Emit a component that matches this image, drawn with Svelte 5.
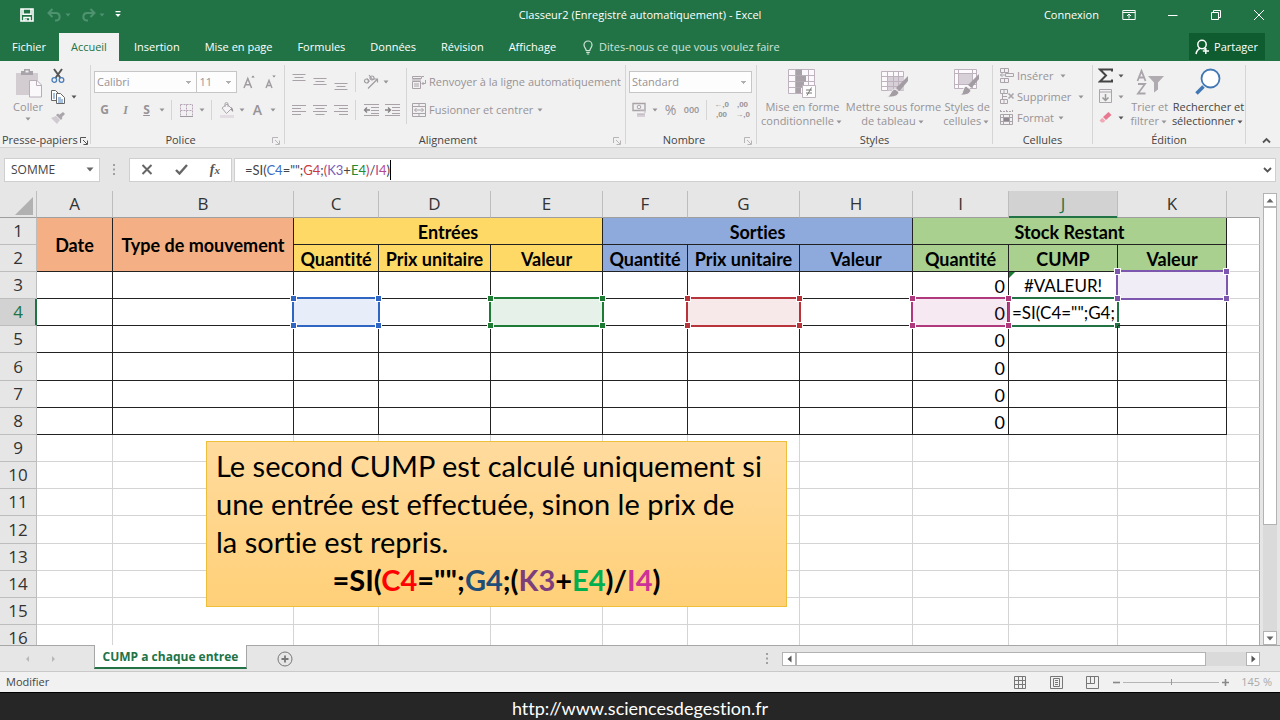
<script lang="ts">
  type Cell = {
    text?: string;
    span?: number;
    rows?: number;
    kind?: string;
    range?: string;
    error?: boolean;
  };

  const tabs = ["Fichier", "Accueil", "Insertion", "Mise en page", "Formules", "Données", "Révision", "Affichage"];
  let activeTab = $state("Accueil");

  const columns = [
    { name: "A", width: 76 },
    { name: "B", width: 181 },
    { name: "C", width: 85 },
    { name: "D", width: 112 },
    { name: "E", width: 112 },
    { name: "F", width: 85 },
    { name: "G", width: 112 },
    { name: "H", width: 113 },
    { name: "I", width: 96 },
    { name: "J", width: 109 },
    { name: "K", width: 109 },
  ];

  const blank = (n: number): Cell[] => Array.from({ length: n }, () => ({}));
  const line = (): Cell[] => [...blank(8), { text: "0", kind: "num" }, ...blank(2)];

  const rows: Cell[][] = [
    [
      { text: "Date", rows: 2, kind: "orange" },
      { text: "Type de mouvement", rows: 2, kind: "orange" },
      { text: "Entrées", span: 3, kind: "yellow" },
      { text: "Sorties", span: 3, kind: "blue" },
      { text: "Stock Restant", span: 3, kind: "green" },
    ],
    [
      { text: "Quantité", kind: "yellow" },
      { text: "Prix unitaire", kind: "yellow" },
      { text: "Valeur", kind: "yellow" },
      { text: "Quantité", kind: "blue" },
      { text: "Prix unitaire", kind: "blue" },
      { text: "Valeur", kind: "blue" },
      { text: "Quantité", kind: "green" },
      { text: "CUMP", kind: "green" },
      { text: "Valeur", kind: "green" },
    ],
    [...blank(8), { text: "0", kind: "num" }, { text: "#VALEUR!", kind: "center", error: true }, { range: "r-violet" }],
    [
      ...blank(2),
      { range: "r-blue" },
      {},
      { range: "r-green" },
      {},
      { range: "r-red" },
      {},
      { text: "0", kind: "num", range: "r-pink" },
      { text: '=SI(C4="";G4;', kind: "edit", range: "r-edit" },
      {},
    ],
    line(),
    line(),
    line(),
    line(),
    ...Array.from({ length: 8 }, () => blank(11)),
  ];

  const formula = [
    ["=SI(", ""],
    ["C4", "blue"],
    ['="";', ""],
    ["G4", "red"],
    [";", ""],
    ["(", "red"],
    ["K3", "violet"],
    ["+", ""],
    ["E4", "green"],
    [")", "red"],
    ["/", ""],
    ["I4", "pink"],
    [")", ""],
  ];

  const note = [
    ["=SI(", "#000"],
    ["C4", "#f00"],
    ['="";', "#000"],
    ["G4", "#1f4e79"],
    [";(", "#000"],
    ["K3", "#7c3f7c"],
    ["+", "#000"],
    ["E4", "#00b050"],
    [")/", "#000"],
    ["I4", "#cc3399"],
    [")", "#000"],
  ];
</script>

{#snippet caret(dark = false)}
  <svg class="caret" class:dark width="10" height="6" viewBox="0 0 10 6"><path d="M2.500 1.500h5L5 4.500z" fill="currentColor" /></svg>
{/snippet}

{#snippet launcher(dark = false)}
  <button class="launcher" class:dark aria-label="Options">
    <svg width="8" height="8" viewBox="0 0 8 8" fill="none" stroke="currentColor"><path d="M.5 6V.5H6M3 3l4 4M7.500 3.500v4h-4" /></svg>
  </button>
{/snippet}

{#snippet lines(widths: number[], top: number, side: string)}
  <svg width="16" height="20" viewBox="0 0 16 20" stroke="#a9a3a9" stroke-width="1">
    {#each widths as w, i}
      {@const x = side === "right" ? 15 - w : side === "center" ? (16 - w) / 2 : 1}
      <path d="M{x} {top + i * 3 + 0.5}h{w}" />
    {/each}
  </svg>
{/snippet}

<div class="app">
  <header>
    <div class="titlebar">
      <div class="quick">
        <button aria-label="Enregistrer">
          <svg width="14" height="14" viewBox="0 0 14 14" fill="none" stroke="#fff" stroke-width="1.600"><path d="M1 1h12v12H1zM3 1v5.200h8V1" /><path d="M4 13V9.500h6V13" /><path d="M6 10.500v2" /></svg>
        </button>
        <button class="dim" aria-label="Annuler">
          <svg width="15" height="14" viewBox="0 0 15 14" fill="none" stroke="currentColor" stroke-width="2"><path d="M5.500 1L1.500 5l4 4M2 5h7.500a3.800 3.800 0 0 1 0 7.500H8" /></svg>
          {@render caret()}
        </button>
        <button class="dim" aria-label="Rétablir">
          <svg width="15" height="14" viewBox="0 0 15 14" fill="none" stroke="currentColor" stroke-width="2"><path d="M9.500 1l4 4-4 4M13 5H5.500a3.800 3.800 0 0 0 0 7.500H7" /></svg>
          {@render caret()}
        </button>
        <button aria-label="Personnaliser">
          <svg width="6" height="7" viewBox="0 0 6 7" fill="#fff"><path d="M.5 0h5v1.300h-5zM.3 3h5.400L3 6z" /></svg>
        </button>
      </div>
      <h1>Classeur2 (Enregistré automatiquement) - Excel</h1>
      <div class="window">
        <a href="#connexion">Connexion</a>
        <button aria-label="Options du ruban">
          <svg width="14" height="12" viewBox="0 0 14 12" fill="none" stroke="#fff"><path d="M.8 1.500h12.400v9H.8zM.8 3.500h12.400M7 9.500V5M5 7l2-2 2 2" /></svg>
        </button>
        <button aria-label="Réduire">
          <svg width="12" height="12" viewBox="0 0 12 12" stroke="#fff"><path d="M1 6.500h9.500" /></svg>
        </button>
        <button aria-label="Restaurer">
          <svg width="12" height="12" viewBox="0 0 12 12" fill="none" stroke="#fff"><path d="M1.500 3.500h7v7h-7zM3.500 3.500v-2h7v7h-2" /></svg>
        </button>
        <button aria-label="Fermer">
          <svg width="12" height="12" viewBox="0 0 12 12" stroke="#fff"><path d="M1 1l10 10M11 1L1 11" /></svg>
        </button>
      </div>
    </div>
    <nav class="tabs">
      {#each tabs as tab}
        <button class:active={tab === activeTab} onclick={() => (activeTab = tab)}>{tab}</button>
      {/each}
      <button class="tell">
        <svg width="10" height="15" viewBox="0 0 10 15" fill="none" stroke="currentColor" stroke-width="1.200"><path d="M3.200 10.500c0-2-2.200-3-2.200-5.500a4 4 0 0 1 8 0c0 2.500-2.200 3.500-2.200 5.500zM3.200 12.300h3.600M3.800 14h2.400" /></svg>
        Dites-nous ce que vous voulez faire
      </button>
      <button class="share">
        <svg width="15" height="16" viewBox="0 0 15 16" fill="none" stroke="#fff" stroke-width="1.500"><circle cx="7" cy="5.500" r="4.200" /><path d="M1 15c.5-2.500 2-4.800 4-5.500M8.500 9.500l1.500 1M10.800 9v6M7.800 12h6.200" /></svg>
        Partager
      </button>
    </nav>
  </header>

  <section class="ribbon">
    <div class="group clipboard">
      <div class="body">
        <button class="big">
          <svg width="28" height="30" viewBox="0 0 28 30"><path d="M2 5h22v22H2z" fill="#d3cdd2" /><path d="M7 3h3V1h6v2h3v4H7z" fill="#a9a4a9" /><path d="M11.500 2.500h3v2h-3z" fill="#f1f1f1" /><path d="M15.500 12.500h7.500l4.500 4.500v12h-12z" fill="#fbf8fb" stroke="#b8aeb8" /><path d="M22.500 12.500v5h5" fill="none" stroke="#b8aeb8" /></svg>
          <span>Coller</span>
          {@render caret()}
        </button>
        <div class="stack">
          <button class="mini" aria-label="Couper">
            <svg width="16" height="16" viewBox="0 0 16 16" fill="none"><path d="M4 1l6.500 9M12 1L5.500 10" stroke="#555" stroke-width="2" /><circle cx="4.300" cy="12" r="2.300" stroke="#4a7ebb" stroke-width="1.300" /><circle cx="11.500" cy="12" r="2.300" stroke="#4a7ebb" stroke-width="1.300" /></svg>
          </button>
          <button class="mini" aria-label="Copier">
            <svg width="16" height="14" viewBox="0 0 16 14" stroke="#666"><path d="M1.500.5h4l3 3v7h-7z" fill="#fff" /><path d="M6.500 3.500h4l4 4v6h-8z" fill="#fff" /><path d="M3 4h2M3 6h2M3 8h2M8 8h3M8 10h5M8 12h5" stroke="#4a7ebb" /></svg>
            {@render caret(true)}
          </button>
          <button class="mini" aria-label="Reproduire la mise en forme">
            <svg width="16" height="14" viewBox="0 0 16 14"><path d="M1 7l5-2 4 4-3 4z" fill="#d0cbd0" /><path d="M6 4l2-1.500L12.500 7 11 9z" fill="#aaa5aa" /><path d="M9 4l4-3 2 2-3.500 3.500z" fill="#aaa5aa" /></svg>
          </button>
        </div>
      </div>
      <div class="caption">Presse-papiers{@render launcher(true)}</div>
    </div>

    <div class="group font">
      <div class="body rows">
        <div class="row">
          <select class="face" aria-label="Police"><option>Calibri</option></select>
          <select class="size" aria-label="Taille"><option>11</option></select>
          <button class="tool grow" aria-label="Agrandir la police">
            <svg width="13" height="16" viewBox="0 0 13 16" fill="none" stroke="#a09ca0" stroke-width="1.500"><path d="M1 14L4.800 4.500 8.600 14M2.500 10.800h4.600" /><path d="M8.300 3.500L10 1.500l1.700 2z" fill="#8a868a" stroke="none" /></svg>
          </button>
          <button class="tool" aria-label="Réduire la police">
            <svg width="13" height="16" viewBox="0 0 13 16" fill="none" stroke="#a09ca0" stroke-width="1.400"><path d="M2 14l3-7.500L8 14M3 11.500h4" /><path d="M8.300 1.500L10 3.500l1.700-2z" fill="#8a868a" stroke="none" /></svg>
          </button>
        </div>
        <div class="row">
          <button class="tool"><b>G</b></button>
          <button class="tool"><i>I</i></button>
          <button class="tool"><u>S</u></button>
          {@render caret()}
          <span class="sep"></span>
          <button class="tool" aria-label="Bordures">
            <svg width="13" height="13" viewBox="0 0 13 13" fill="none" stroke="#b5a4b5"><path d="M.5.5h12v12M.5.5v12M6.500.5v12M.5 6.500h12" stroke-dasharray="2 1" /><path d="M0 12.500h13" stroke="#a09aa0" /></svg>
          </button>
          {@render caret()}
          <span class="sep"></span>
          <button class="tool" aria-label="Remplissage">
            <svg width="16" height="16" viewBox="0 0 16 16" fill="none"><path d="M3 6l5-4 4.500 4.500-5 5z" fill="#f7f4f7" stroke="#aaa5aa" /><path d="M6 5V2a1.500 1.500 0 0 1 3 0v3" stroke="#aaa5aa" /><path d="M12 5c2 1 2.500 3 2 5l-2-2z" fill="#999599" /><path d="M1 13h14v3H1z" fill="#e3dde3" /></svg>
          </button>
          {@render caret()}
          <button class="tool letter">A</button>
          {@render caret()}
        </div>
      </div>
      <div class="caption">Police{@render launcher()}</div>
    </div>

    <div class="group align">
      <div class="body rows">
        <div class="row">
          <button class="tool" aria-label="Aligner en haut">{@render lines([13, 9, 13], 2, "center")}</button>
          <button class="tool" aria-label="Aligner au centre">{@render lines([13, 9, 13], 6, "center")}</button>
          <button class="tool" aria-label="Aligner en bas">{@render lines([13, 9, 13], 11, "center")}</button>
          <span class="sep"></span>
          <div class="pair">
            <button class="tool" aria-label="Orientation">
              <svg width="16" height="16" viewBox="0 0 16 16" fill="none" stroke="#a09ca0" stroke-width="1.200"><circle cx="3.500" cy="7" r="2" /><path d="M4 4.500l2.500 3.200M6 1l4 5" /><circle cx="9" cy="4" r="2" /><path d="M5 14.500L14 5.500M11 5h3.500v3.500" /></svg>
            </button>
            {@render caret()}
          </div>
          <span class="sep tall"></span>
          <button class="wide">
            <svg width="16" height="15" viewBox="0 0 16 15" fill="none" stroke="#a9a3a9"><path d="M1.500 1.500h9v2h-9zM1.500 6.500h8v7h-8zM3 9h5M3 11h5M1 5h9" /><path d="M11 1.500h2M14.500 5v3.500H11M12.500 7L11 8.500l1.500 1.500" /></svg>
            Renvoyer à la ligne automatiquement
          </button>
        </div>
        <div class="row">
          <button class="tool" aria-label="Aligner à gauche">{@render lines([14, 9, 14, 9], 5, "left")}</button>
          <button class="tool" aria-label="Centrer">{@render lines([14, 9, 14, 9], 5, "center")}</button>
          <button class="tool" aria-label="Aligner à droite">{@render lines([14, 9, 14, 9], 5, "right")}</button>
          <span class="sep"></span>
          <div class="pair">
            <button class="tool" aria-label="Diminuer le retrait">
              <svg width="16" height="12" viewBox="0 0 16 12" fill="none" stroke="#a9a3a9"><path d="M1 .5h15M8 3.500h8M8 6.500h8M8 9.500h8M1 11.500h15" /><path d="M7 6H1.500M4 3.500L1.500 6 4 8.500" stroke="#858185" stroke-width="1.300" /></svg>
            </button>
            <button class="tool" aria-label="Augmenter le retrait">
              <svg width="16" height="12" viewBox="0 0 16 12" fill="none" stroke="#a9a3a9"><path d="M1 .5h15M8 3.500h8M8 6.500h8M8 9.500h8M1 11.500h15" /><path d="M1 6h5.500M4 3.500L6.500 6 4 8.500" stroke="#858185" stroke-width="1.300" /></svg>
            </button>
          </div>
          <span class="sep tall"></span>
          <button class="wide">
            <svg width="16" height="15" viewBox="0 0 16 15" fill="none" stroke="#a9a3a9"><path d="M1.500.5h13v13h-13zM1.500 3.500h13M1.500 10.500h13M8 .5v3M8 10.500v3M3.500 7h9M5.500 5L3.500 7l2 2M10.500 5l2 2-2 2" /></svg>
            Fusionner et centrer{@render caret()}
          </button>
        </div>
      </div>
      <div class="caption">Alignement{@render launcher()}</div>
    </div>

    <div class="group number">
      <div class="body rows">
        <div class="row">
          <select class="format" aria-label="Format de nombre"><option>Standard</option></select>
        </div>
        <div class="row">
          <button class="tool" aria-label="Monétaire">
            <svg width="15" height="16" viewBox="0 0 15 16" fill="none" stroke="#a9a3a9"><path d="M1 1.500h12v7H1z" stroke-width="1.400" /><circle cx="7" cy="5" r="1.800" /><path d="M5 11h8v4H5z" fill="#d6d0d6" stroke="none" /><path d="M5.500 12.500h7M8 8h5v3" stroke="#c3bdc3" /></svg>
          </button>
          {@render caret()}
          <button class="tool pct">%</button>
          <button class="tool zero">000</button>
          <span class="sep"></span>
          <button class="tool dec"><span>←,0</span><span>,00</span></button>
          <button class="tool dec"><span>,00</span><span>→,0</span></button>
        </div>
      </div>
      <div class="caption">Nombre{@render launcher()}</div>
    </div>

    <div class="group styles">
      <div class="body">
        <button class="big">
          <svg width="28" height="30" viewBox="0 0 28 30" fill="none" stroke="#bdb2bd"><path d="M.5 1.500h26v24H.5z" fill="#fbf9fb" /><path d="M.5 7.500h26M.5 13.500h26M.5 19.500h26M7.500 1.500v24M20.500 1.500v24" /><path d="M8 1.500h6v6H8zM8 8h10v5.500H8zM8 14h8v5.500H8zM8 20h5v5H8z" fill="#a8a2a8" stroke="none" /><path d="M14.500 17.500h13v12h-13z" fill="#fff" /><path d="M18 22h6M18 25h6M23.500 19.500l-4.500 8" stroke="#777" /></svg>
          <span>Mise en forme<br />conditionnelle{@render caret()}</span>
        </button>
        <button class="big">
          <svg width="28" height="30" viewBox="0 0 28 30" fill="none" stroke="#bdb2bd"><path d="M1.500 3.500h22v19h-22z" fill="#fbf9fb" /><path d="M7 9h17v13.500H7z" fill="#d8d0d8" stroke="none" /><path d="M1.500 8.500h22M1.500 13.500h22M1.500 18.500h22M7.500 3.500v19M13.500 3.500v19M18.500 3.500v19" /><path d="M28 8v5L19.500 23l-3.500-3z" fill="#a39da3" stroke="none" /><path d="M15 21l4 3c-1 4-5 5.500-11.500 5 3-1.500 3-6.500 7.500-8z" fill="#a39da3" stroke="#f1f1f1" /></svg>
          <span>Mettre sous forme<br />de tableau{@render caret()}</span>
        </button>
        <button class="big">
          <svg width="28" height="30" viewBox="0 0 28 30" fill="none" stroke="#bdb2bd"><path d="M1.500 1.500h22v19h-22z" fill="#fbf9fb" /><path d="M6 6h13v10H6z" fill="#d8d0d8" stroke="none" /><path d="M1.500 5.500h22M1.500 16.500h22M5.500 1.500v19M19.500 1.500v19" /><path d="M26 6v5L18.500 20l-3.500-3z" fill="#a39da3" stroke="none" /><path d="M13 18l5 4c-1 4-5 5.500-10.500 5 3-1.500 2-7.500 5.500-9z" fill="#a39da3" stroke="#f1f1f1" /></svg>
          <span>Styles de<br />cellules{@render caret()}</span>
        </button>
      </div>
      <div class="caption">Styles</div>
    </div>

    <div class="group cells">
      <div class="body">
        <div class="stack">
          <button class="wide">
            <svg width="16" height="15" viewBox="0 0 16 15" fill="none" stroke="#aaa4aa"><path d="M1.500.5h8v4h-8zM5.500.5v4M1.500 10.500h8v4h-8zM5.500 10.500v4M6.500 5.500h8v3h-8zM1 7h5M3.500 5L1.500 7l2 2" /></svg>
            Insérer <span class="gap"></span>{@render caret()}
          </button>
          <button class="wide">
            <svg width="16" height="15" viewBox="0 0 16 15" fill="none" stroke="#aaa4aa"><path d="M1.500.5h7v4h-7zM5 .5v4M1.500 10.500h7v4h-7zM5 10.500v4M3 7.500h5M3.500 5v5" /><path d="M9.500 4.500l5 5M14.500 4.500l-5 5" stroke-width="1.600" /></svg>
            Supprimer <span class="gap"></span>{@render caret()}
          </button>
          <button class="wide">
            <svg width="16" height="15" viewBox="0 0 16 15" fill="none" stroke="#aaa4aa"><path d="M1 1.500h13M1.500 0v3M7.500 0v3M13.500 0v3" stroke-dasharray="2 1" /><path d="M1.500 4.500h12v10h-12zM4.500 4.500v10M10.500 4.500v10M1.500 7.500h12M1.500 11.500h12" /><path d="M5 8h5v3H5z" fill="#8d888d" stroke="none" /></svg>
            Format{@render caret()}
          </button>
        </div>
      </div>
      <div class="caption">Cellules</div>
    </div>

    <div class="group edit-group">
      <div class="body">
        <div class="stack">
          <button class="mini" aria-label="Somme automatique">
            <svg width="15" height="15" viewBox="0 0 15 15" fill="none" stroke="#444" stroke-width="2"><path d="M14 3.500V1.500H2l6 6-6 6h12v-2" /></svg>
            {@render caret(true)}
          </button>
          <button class="mini" aria-label="Remplir">
            <svg width="15" height="15" viewBox="0 0 15 15" fill="none" stroke="#aaa5aa"><path d="M1.500.5h12v13h-12zM1.500 3h12" /><path d="M7.500 5v6M4.500 8.500l3 3 3-3" stroke="#999" stroke-width="1.500" /></svg>
            {@render caret()}
          </button>
          <button class="mini" aria-label="Effacer">
            <svg width="15" height="13" viewBox="0 0 15 13"><path d="M5 6l5.500-5 3 3-5.500 5z" fill="#e8788f" /><path d="M4.300 6.700l3 3L5.500 11.500H3.500L1.500 9.500z" fill="#f2a9b7" /></svg>
            {@render caret(true)}
          </button>
        </div>
        <button class="big">
          <svg width="28" height="30" viewBox="0 0 28 30" fill="none" stroke="#aaa5aa" stroke-width="1.800"><path d="M1.500 13L5.500 3l4 10M3 9.500h5M2 16h7l-7 9.500h7.500" /><path d="M12 8h16l-6 6.500v7l-4 3v-10z" fill="#b0abb0" stroke="none" /></svg>
          <span>Trier et<br />filtrer{@render caret()}</span>
        </button>
        <button class="big on">
          <svg width="28" height="30" viewBox="0 0 28 30" fill="none" stroke="#4178b4"><path d="M9.500 18.500L2.500 25.500" stroke-width="3.500" /><circle cx="16.500" cy="10.500" r="9" fill="#fff" stroke-width="1.800" /></svg>
          <span>Rechercher et<br />sélectionner{@render caret(true)}</span>
        </button>
      </div>
      <div class="caption">Édition</div>
    </div>
    <button class="collapse" aria-label="Réduire le ruban">
      <svg width="9" height="7" viewBox="0 0 9 7" fill="none" stroke="#555" stroke-width="1.800"><path d="M1 5.500L4.500 2 8 5.500" /></svg>
    </button>
  </section>

  <section class="formulabar">
    <div class="namebox">
      <input aria-label="Zone Nom" value="SOMME" />
      <button aria-label="Liste des noms"><svg width="8" height="5" viewBox="0 0 8 5"><path d="M.5.5h7L4 4.500z" fill="#666" /></svg></button>
    </div>
    <svg class="dots" width="3" height="12" viewBox="0 0 3 12" fill="#a0a0a0"><path d="M0 0h2v2H0zM0 4.500h2v2H0zM0 9h2v2H0z" /></svg>
    <div class="actions">
      <button aria-label="Annuler"><svg width="12" height="11" viewBox="0 0 12 11" stroke="#666" stroke-width="2"><path d="M1.500 1l9 9M10.500 1l-9 9" /></svg></button>
      <button aria-label="Entrer"><svg width="13" height="11" viewBox="0 0 13 11" fill="none" stroke="#666" stroke-width="2.400"><path d="M1 6l3.500 3.500L12 1" /></svg></button>
      <button class="fx" aria-label="Insérer une fonction">f<small>x</small></button>
    </div>
    <div class="formula">
      <div role="textbox" tabindex="0" aria-label="Barre de formule" class="text">
        {#each formula as [part, tone]}<span class={tone}>{part}</span>{/each}<span class="cursor"></span>
      </div>
      <button aria-label="Développer"><svg width="9" height="6" viewBox="0 0 9 6" fill="none" stroke="#555" stroke-width="1.800"><path d="M1 1l3.500 3.500L8 1" /></svg></button>
    </div>
  </section>

  <main>
    <div class="sheet">
      <table>
        <colgroup>
          <col style:width="37px" />
          {#each columns as col}
            <col style:width={`${col.width}px`} />
          {/each}
          <col />
        </colgroup>
        <thead>
          <tr>
            <th class="corner"><svg width="18" height="18" viewBox="0 0 18 18"><path d="M18 0v18H0z" fill="#b1b1b1" /></svg></th>
            {#each columns as col}
              <th class:current={col.name === "J"}>{col.name}</th>
            {/each}
            <th class="last"></th>
          </tr>
        </thead>
        <tbody>
          {#each rows as cells, r}
            <tr class:ledger={r < 8}>
              <th class:current={r === 3}>{r + 1}</th>
              {#each cells as cell}
                <td class={cell.kind} colspan={cell.span ?? 1} rowspan={cell.rows ?? 1}>
                  {#if cell.text}<div class="value">{cell.text}</div>{/if}
                  {#if cell.error}<span class="flag"></span>{/if}
                  {#if cell.range}
                    <div class="range {cell.range}"><i></i><i></i><i></i><i></i></div>
                  {/if}
                </td>
              {/each}
              <td class="last"></td>
            </tr>
          {/each}
        </tbody>
      </table>
      <aside class="note">
        <p>Le second CUMP est calculé uniquement si<br />une entrée est effectuée, sinon le prix de<br />la sortie est repris.</p>
        <p class="sum">{#each note as [part, color]}<span style:color>{part}</span>{/each}</p>
      </aside>
    </div>
    <div class="vscroll">
      <button aria-label="Haut"><svg width="8" height="5" viewBox="0 0 8 5"><path d="M.5 4.500h7L4 .5z" fill="#666" /></svg></button>
      <div class="track"><div class="thumb"></div></div>
      <button aria-label="Bas"><svg width="8" height="5" viewBox="0 0 8 5"><path d="M.5.5h7L4 4.500z" fill="#666" /></svg></button>
    </div>
  </main>

  <div class="sheetbar">
    <div class="arrows">
      <button aria-label="Feuille précédente"><svg width="5" height="8" viewBox="0 0 5 8"><path d="M4 1v6L1 4z" fill="#b8b8b8" /></svg></button>
      <button aria-label="Feuille suivante"><svg width="5" height="8" viewBox="0 0 5 8"><path d="M1 1v6l3-3z" fill="#b8b8b8" /></svg></button>
    </div>
    <button class="sheettab">CUMP a chaque entree</button>
    <button class="add" aria-label="Nouvelle feuille">
      <svg width="16" height="16" viewBox="0 0 16 16" fill="none" stroke="#777"><circle cx="8" cy="8" r="7" /><path d="M8 4.500v7M4.500 8h7" stroke-width="1.800" /></svg>
    </button>
    <svg class="dots" width="3" height="12" viewBox="0 0 3 12" fill="#a0a0a0"><path d="M0 0h2v2H0zM0 4.500h2v2H0zM0 9h2v2H0z" /></svg>
    <div class="hscroll">
      <button aria-label="Gauche"><svg width="5" height="8" viewBox="0 0 5 8"><path d="M4.500.5v7L.5 4z" fill="#555" /></svg></button>
      <div class="track"><div class="thumb"></div></div>
      <button aria-label="Droite"><svg width="5" height="8" viewBox="0 0 5 8"><path d="M.5.5v7l4-3.500z" fill="#555" /></svg></button>
    </div>
  </div>

  <div class="status">
    <span>Modifier</span>
    <div class="views">
      <button aria-label="Normal"><svg width="13" height="13" viewBox="0 0 13 13" fill="none" stroke="#777"><path d="M.5.5h11v12H.5zM.5 4.500h11M.5 8.500h11M4.500.5v12M8.500.5v12" /></svg></button>
      <button aria-label="Mise en page"><svg width="13" height="13" viewBox="0 0 13 13" fill="none" stroke="#777"><path d="M.5.5h12v12H.5zM3.500 2.500h6v8h-6zM5 4.500h3M5 6.500h3M5 8.500h3" /></svg></button>
      <button aria-label="Sauts de page"><svg width="13" height="13" viewBox="0 0 13 13" fill="none" stroke="#777"><path d="M.5.5h12v12H.5zM4.500.5v7M8.500.5v7M.5 7.500h8" /></svg></button>
    </div>
    <div class="zoom">
      <button aria-label="Zoom arrière"><svg width="7" height="7" viewBox="0 0 7 7" stroke="#888" stroke-width="1.600"><path d="M0 3.500h7" /></svg></button>
      <input type="range" min="10" max="280" value="145" aria-label="Zoom" />
      <button aria-label="Zoom avant"><svg width="7" height="7" viewBox="0 0 7 7" stroke="#888" stroke-width="1.600"><path d="M0 3.500h7M3.500 0v7" /></svg></button>
    </div>
    <span class="level">145 %</span>
  </div>

  <footer><a href="http://www.sciencesdegestion.fr">http://www.sciencesdegestion.fr</a></footer>
</div>

<style>
  :global(body) {
    margin: 0;
    background: #262626;
  }

  .app {
    --excel: #217346;
    --grey: #e6e6e6;
    --off: #979397;
    display: flex;
    flex-direction: column;
    height: 100vh;
    overflow: hidden;
    font: 11px/14px "Open Sans", "Noto Sans", sans-serif;
    color: #444;
  }

  button {
    display: flex;
    align-items: center;
    justify-content: center;
    background: none;
    border: none;
    padding: 0;
    margin: 0;
    font: inherit;
    color: inherit;
    white-space: nowrap;
  }

  svg {
    flex: none;
  }

  a {
    color: inherit;
    text-decoration: none;
  }

  /* title bar and tabs */
  header {
    background: var(--excel);
    color: #fff;
  }

  .titlebar {
    display: grid;
    grid-template-columns: 1fr auto 1fr;
    align-items: center;
    height: 33px;
    padding: 0 15px 4px;
    box-sizing: border-box;
  }

  .quick {
    display: flex;
    align-items: center;
    gap: 8px;
    padding-left: 5px;
  }

  .quick button:first-child {
    margin-right: 5px;
  }

  .quick .caret {
    margin-left: 1px;
  }

  .dim {
    color: #4f9270;
  }

  h1 {
    margin: 0;
    font: inherit;
  }

  .window {
    display: flex;
    align-items: center;
    justify-content: flex-end;
    gap: 31px;
  }

  .window a {
    margin-right: -8px;
  }

  .tabs {
    display: flex;
    height: 28px;
  }

  .tabs button {
    padding: 0 12px;
    margin-right: 1px;
  }

  .tabs button.active {
    background: #f1f1f1;
    color: var(--excel);
    margin: 0 3px 0 0;
  }

  .tabs .tell {
    color: #cfe3d8;
    gap: 6px;
    margin: 0 auto 0 14px;
    padding: 0;
  }

  .tabs .share {
    gap: 4px;
    padding: 0 7px 0 6px;
    margin: 0 15px 1px 0;
    background: #0e5c2f;
  }

  /* ribbon */
  .ribbon {
    display: flex;
    height: 87px;
    padding-top: 4px;
    box-sizing: border-box;
    background: #f1f1f1;
    border-bottom: 1px solid #d2d2d2;
    color: var(--off);
  }

  .group {
    display: flex;
    flex-direction: column;
    height: 79px;
    box-sizing: border-box;
    border-right: 1px solid #d5d5d5;
  }

  .clipboard {
    width: 91px;
  }

  .font {
    width: 194px;
  }

  .align {
    width: 341px;
  }

  .number {
    width: 131px;
  }

  .styles {
    width: 236px;
  }

  .cells {
    width: 100px;
  }

  .edit-group {
    width: 153px;
  }

  .body {
    display: flex;
    height: 68px;
  }

  .rows {
    flex-direction: column;
    gap: 6px;
    padding: 6px 3px 0;
    box-sizing: border-box;
  }

  .row {
    display: flex;
    align-items: center;
    height: 22px;
  }

  .caption {
    position: relative;
    height: 11px;
    text-align: center;
    color: #444;
  }

  .font .caption,
  .align .caption,
  .number .caption {
    padding-right: 14px;
  }

  .clipboard .caption {
    text-align: left;
    padding-left: 2px;
  }

  .launcher {
    position: absolute;
    right: 4px;
    top: 4px;
    color: #b8b4b8;
  }

  .clipboard .launcher {
    right: 2px;
  }

  .launcher.dark,
  .caret.dark {
    color: #555;
  }

  .big {
    flex-direction: column;
    justify-content: flex-start;
    gap: 2px;
    padding-top: 3px;
  }

  .big.on {
    color: #444;
  }

  .clipboard .big {
    width: 56px;
  }

  .styles .body {
    padding-left: 4px;
    gap: 2px;
  }

  .edit-group .big + .big {
    margin-left: 3px;
  }

  .stack {
    display: flex;
    flex-direction: column;
  }

  .stack button {
    height: 21px;
    justify-content: flex-start;
  }

  .clipboard .stack {
    margin-left: -6px;
  }

  .cells .stack {
    padding-left: 6px;
  }

  .edit-group .stack {
    padding-left: 5px;
    width: 35px;
  }

  .mini .caret {
    margin-left: 3px;
  }

  .wide {
    gap: 2px;
  }

  .gap {
    width: 1px;
  }

  .tool {
    width: 21px;
    height: 22px;
  }

  .tool b,
  .tool i,
  .tool u {
    font-size: 12px;
    font-weight: 700;
  }

  .tool i {
    font-family: "Liberation Serif", serif;
  }

  .letter {
    font-size: 14px;
    font-weight: 600;
  }

  .sep {
    width: 1px;
    height: 20px;
    margin: 0 4px;
    background: #d5d5d5;
  }

  .tall {
    height: 28px;
  }

  .pair {
    display: flex;
    align-items: center;
    width: 42px;
  }

  .pct {
    font-size: 14px;
  }

  .dec {
    flex-direction: column;
    font: 700 8px/10px "Liberation Sans", sans-serif;
  }

  .zero {
    font-size: 9px;
    font-weight: 600;
  }

  select {
    appearance: none;
    height: 22px;
    box-sizing: border-box;
    margin: 0;
    padding: 0 2px;
    border: 1px solid #c6c6c6;
    border-radius: 0;
    background:
      linear-gradient(#b0b0b0, #b0b0b0) no-repeat right 5px top 9px / 5px 1px,
      linear-gradient(#b0b0b0, #b0b0b0) no-repeat right 6px top 10px / 3px 1px,
      linear-gradient(#b0b0b0, #b0b0b0) no-repeat right 7px top 11px / 1px 1px,
      #fdfdfd;
    font: inherit;
    color: var(--off);
  }

  .face {
    width: 104px;
  }

  .size {
    width: 41px;
    margin-left: -1px;
  }

  .grow {
    margin-left: 2px;
  }

  .format {
    width: 123px;
  }

  .collapse {
    margin: auto 9px 3px auto;
  }

  /* formula bar */
  .formulabar {
    display: flex;
    align-items: center;
    height: 43px;
    padding: 0 4px 0 4px;
    box-sizing: border-box;
    background: var(--grey);
  }

  .namebox,
  .actions,
  .formula {
    display: flex;
    align-items: center;
    height: 24px;
    box-sizing: border-box;
    background: #fff;
    border: 1px solid #cfcfcf;
  }

  .namebox {
    width: 96px;
    padding-right: 5px;
  }

  .namebox input {
    flex: 1;
    min-width: 0;
    border: none;
    padding: 0 6px;
    font: 12px/14px "Open Sans", sans-serif;
    color: #444;
    outline: none;
  }

  .formulabar .dots {
    margin: 0 13px;
  }

  .actions {
    width: 103px;
    justify-content: space-around;
  }

  .fx {
    font: italic 700 14px/16px "Liberation Serif", serif;
    color: #555;
  }

  .fx small {
    font-size: 11px;
  }

  .formula {
    flex: 1;
    margin-left: 2px;
    padding: 0 3px 0 10px;
  }

  .text {
    flex: 1;
    font: 13px/18px Lato, sans-serif;
    outline: none;
  }

  .text .blue {
    color: #3a6cc4;
  }

  .text .red {
    color: #c93a43;
  }

  .text .violet {
    color: #7c5cb8;
  }

  .text .green {
    color: #218a33;
  }

  .text .pink {
    color: #b6478f;
  }

  .cursor {
    border-left: 1px solid #000;
    padding: 2px 0;
  }

  /* grid */
  main {
    flex: 1;
    display: flex;
    min-height: 0;
    background: var(--grey);
  }

  .sheet {
    position: relative;
    flex: 1;
    overflow: hidden;
  }

  table {
    width: 100%;
    table-layout: fixed;
    border-collapse: separate;
    border-spacing: 0;
    background: #fff;
    font: 18px/28px Lato, sans-serif;
    color: #000;
  }

  tr {
    height: 27px;
  }

  tbody tr:nth-child(6n) {
    height: 28px;
  }

  th {
    padding: 0;
    font: 17px/26px "Open Sans", sans-serif;
    color: #333;
    background: var(--grey);
    border-right: 1px solid #bdbdbd;
    border-bottom: 1px solid #bdbdbd;
  }

  thead th {
    border-bottom-color: #9f9f9f;
  }

  thead th.last {
    border-right-color: var(--grey);
  }

  th.current {
    background: #d2d2d2;
    color: var(--excel);
  }

  thead th.current {
    box-shadow: inset 0 -1px var(--excel);
    border-bottom-color: var(--excel);
  }

  tbody th.current {
    box-shadow: inset -1px 0 var(--excel);
    border-right-color: var(--excel);
  }

  .corner svg {
    display: block;
    margin: 4px 3px 0 auto;
  }

  td {
    position: relative;
    padding: 0;
    border-right: 1px solid #d4d4d4;
    border-bottom: 1px solid #d4d4d4;
  }

  .ledger td:not(.last) {
    border-color: #222;
  }

  td.last {
    border-right-color: #ababab;
  }

  .value {
    height: 26px;
    overflow: hidden;
    white-space: nowrap;
  }

  .orange,
  .yellow,
  .blue,
  .green,
  .center {
    text-align: center;
  }

  td.orange,
  td.yellow,
  td.blue,
  td.green {
    font-weight: 700;
  }

  td.orange {
    background: #f4b084;
    line-height: 26px;
  }

  td.yellow {
    background: #ffd966;
  }

  td.blue {
    background: #8ea9db;
  }

  td.green {
    background: #a9d08e;
  }

  .center,
  .edit {
    font-size: 17px;
  }

  .num {
    text-align: right;
  }

  .num .value {
    padding-right: 3px;
  }

  .edit .value {
    padding-left: 3px;
  }

  .flag {
    position: absolute;
    left: 0;
    top: 0;
    border: 3px solid #1a7a2e;
    border-right-color: transparent;
    border-bottom-color: transparent;
  }

  .range {
    position: absolute;
    inset: -2px;
    border: 2px solid currentColor;
    z-index: 1;
  }

  .range i {
    position: absolute;
    width: 5px;
    height: 5px;
    background: currentColor;
    outline: 1px solid #fff;
  }

  .range i:nth-child(odd) {
    left: -3px;
  }

  .range i:nth-child(even) {
    right: -3px;
  }

  .range i:nth-child(-n + 2) {
    top: -3px;
  }

  .range i:nth-child(n + 3) {
    bottom: -3px;
  }

  .r-blue {
    color: #2f66c4;
    background: #2f66c41c;
  }

  .r-green {
    color: #1e7b34;
    background: #1e7b341c;
  }

  .r-red {
    color: #b8343a;
    background: #b8343a1c;
  }

  .r-violet {
    color: #7d57ad;
    background: #7d57ad1c;
  }

  .r-pink {
    color: #b0387c;
    background: #b0387c1c;
  }

  .r-edit {
    color: var(--excel);
    z-index: 0;
  }

  .r-edit i:not(:last-child) {
    display: none;
  }

  .note {
    position: absolute;
    left: 206px;
    top: 250px;
    width: 581px;
    box-sizing: border-box;
    padding: 5px 9px 7px;
    border: 1px solid #efbf3c;
    background: linear-gradient(#ffdb9e, #ffd078);
    font: 29px/38px Lato, sans-serif;
    color: #000;
    white-space: nowrap;
  }

  .note p {
    margin: 0;
  }

  .note .sum {
    text-align: center;
    font-weight: 700;
  }

  .vscroll {
    display: flex;
    flex-direction: column;
    width: 14px;
    margin: 2px 3px 0 3px;
  }

  .vscroll button,
  .hscroll button,
  .thumb {
    box-sizing: border-box;
    background: #fff;
    border: 1px solid #b3b3b3;
  }

  .vscroll button {
    height: 14px;
  }

  .track {
    flex: 1;
    background: #dadada;
  }

  .vscroll .thumb {
    height: 75%;
  }

  /* sheet tabs */
  .sheetbar {
    display: flex;
    align-items: center;
    height: 27px;
    box-sizing: border-box;
    background: var(--grey);
    border-top: 1px solid #a6a6a6;
    border-bottom: 1px solid #c9c9c9;
  }

  .arrows {
    display: flex;
    gap: 21px;
    width: 94px;
    padding-left: 25px;
    box-sizing: border-box;
  }

  .sheettab {
    align-self: flex-start;
    height: 24px;
    width: 153px;
    margin-top: -1px;
    padding-top: 2px;
    box-sizing: border-box;
    background: #fff;
    border: 1px solid #a6a6a6;
    border-width: 0 1px 2px;
    border-bottom-color: var(--excel);
    color: var(--excel);
    font-size: 12px;
    font-weight: 700;
  }

  .add {
    margin: 0 auto 0 30px;
  }

  .hscroll {
    display: flex;
    width: 478px;
    height: 14px;
    margin: 0 20px 0 13px;
  }

  .hscroll button {
    width: 14px;
  }

  .hscroll .thumb {
    width: 91%;
    height: 100%;
  }

  .status {
    display: flex;
    align-items: center;
    height: 20px;
    padding: 0 8px 0 6px;
    background: #f1f1f1;
  }

  .views {
    display: flex;
    gap: 23px;
    margin-left: auto;
  }

  .zoom {
    display: flex;
    align-items: center;
    gap: 3px;
    margin: 0 12px 0 14px;
  }

  .zoom input {
    appearance: none;
    width: 96px;
    height: 12px;
    margin: 0;
    background: linear-gradient(#b5b5b5, #b5b5b5) no-repeat center / 100% 1px;
  }

  .zoom input::-webkit-slider-thumb {
    appearance: none;
    width: 1px;
    height: 6px;
    background: #999;
  }

  .level {
    color: #aaa;
  }

  footer {
    height: 28px;
    box-sizing: border-box;
    border-top: 1px solid #000;
    background: #262626;
    color: #fff;
    text-align: center;
    font: 18px/31px Lato, sans-serif;
  }

  .app,
  .app table,
  .app .note,
  .app .text,
  .app footer {
    font-variant-ligatures: none;
  }
</style>
